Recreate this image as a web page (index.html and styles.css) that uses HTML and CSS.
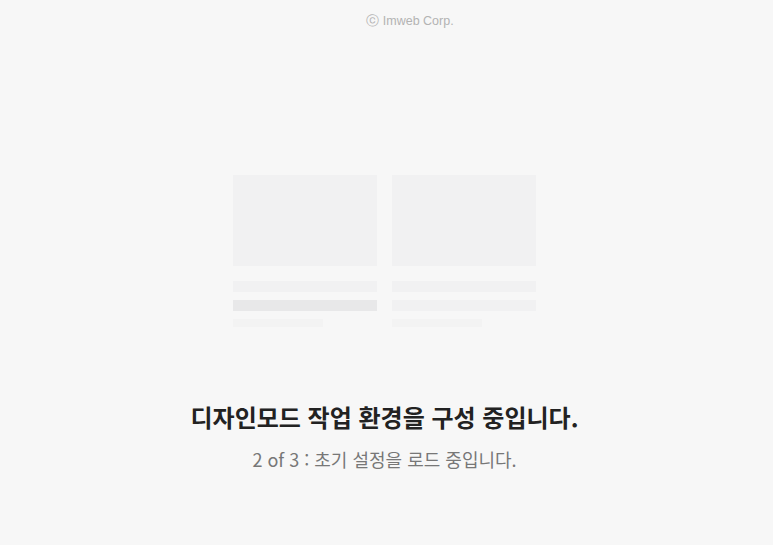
FILE: index.html
```html
<!DOCTYPE html>
<html lang="ko">
<head>
<meta charset="utf-8">
<link rel="stylesheet" href="styles.css">
</head>
<body>
<div class="page">
  <div class="copyright">ⓒ Imweb Corp.</div>
  <div class="skeleton">
    <div class="col">
      <div class="thumb"></div>
      <div class="line l1"></div>
      <div class="line l2 dark"></div>
      <div class="line l3"></div>
    </div>
    <div class="col">
      <div class="thumb"></div>
      <div class="line l1"></div>
      <div class="line l2"></div>
      <div class="line l3"></div>
    </div>
  </div>
  <h1 class="title">디자인모드 작업 환경을 구성 중입니다.</h1>
  <p class="sub">2 of 3 : 초기 설정을 로드 중입니다.</p>
</div>
</body>
</html>
```
FILE: styles.css
```css
html, body {
  margin: 0;
  padding: 0;
  background: #f7f7f7;
}
.page {
  width: 769px;
  height: 545px;
  display: flex;
  flex-direction: column;
  align-items: center;
  font-family: "Noto Sans CJK KR", "Noto Sans", sans-serif;
}
.copyright {
  margin-top: 13px;
  margin-left: 51px;
  font-family: "Liberation Sans", Arial, sans-serif;
  font-size: 12.5px;
  line-height: 16px;
  color: #b3b3b3;
}
.skeleton {
  margin-top: 146px;
  display: flex;
  gap: 15px;
}
.col {
  width: 144px;
  display: flex;
  flex-direction: column;
}
.thumb {
  height: 91px;
  background: #f1f1f2;
}
.line {
  background: #f1f1f2;
}
.l1 {
  margin-top: 15px;
  height: 11px;
}
.l2 {
  margin-top: 8px;
  height: 11px;
}
.l2.dark {
  background: #e8e8e9;
}
.l3 {
  margin-top: 8px;
  height: 8px;
  width: 90px;
  background: #f3f3f3;
}
.title {
  margin: 73px 0 0;
  font-size: 24px;
  line-height: 34px;
  font-weight: 700;
  color: #222;
}
.sub {
  margin: 12px 0 0;
  font-size: 18px;
  line-height: 26px;
  color: #777;
}
```
